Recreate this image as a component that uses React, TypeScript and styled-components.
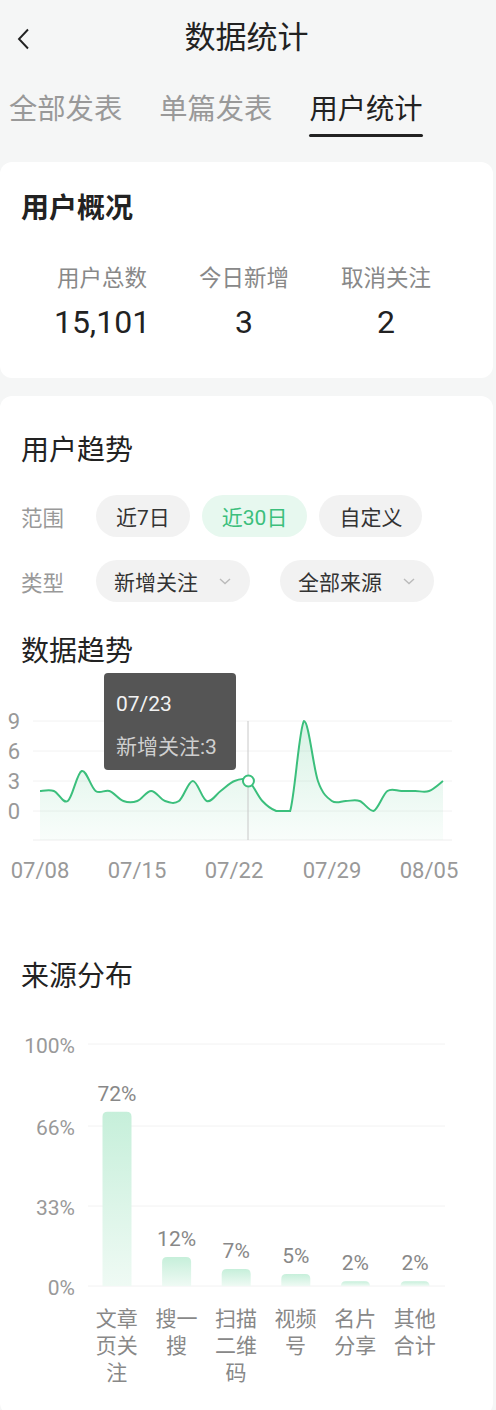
import React from "react";
import styled, { createGlobalStyle } from "styled-components";

const GlobalStyle = createGlobalStyle`
  html, body { margin: 0; padding: 0; background: #f5f6f6; }
  body { font-family: Roboto, "Noto Sans CJK SC", "Noto Sans", sans-serif; color: #222; }
  * { box-sizing: border-box; }
`;

const GREEN = "#3bbf7c";

const Page = styled.div`
  width: 496px;
  min-height: 1410px;
  padding-right: 3px;
  display: flex;
  flex-direction: column;
`;

const Header = styled.header`
  height: 76px;
  position: relative;
  display: flex;
  align-items: center;
  justify-content: center;
`;

const BackButton = styled.button`
  position: absolute;
  left: 12px;
  top: 25px;
  width: 22px;
  height: 28px;
  border: 0;
  background: none;
  padding: 0;
  display: flex;
  align-items: center;
  justify-content: center;
`;

const Title = styled.h1`
  margin: 0;
  font-size: 31px;
  font-weight: 400;
  color: #222;
  line-height: 38px;
`;

const Tabs = styled.nav`
  display: flex;
  gap: 37px;
  padding-left: 9px;
  height: 86px;
`;

const Tab = styled.div<{ $active?: boolean }>`
  position: relative;
  padding-top: 16px;
  font-size: 28.3px;
  line-height: 36px;
  height: 62px;
  color: ${(p) => (p.$active ? "#222" : "#999")};
  font-weight: 400;
  &::after {
    content: "";
    display: ${(p) => (p.$active ? "block" : "none")};
    position: absolute;
    left: 0;
    right: 0;
    top: 58px;
    height: 3px;
    border-radius: 2px;
    background: #222;
  }
`;

const Card = styled.section<{ $pad?: string }>`
  background: #fff;
  border-radius: 12px;
  padding: ${(p) => p.$pad || "29px 0 36px 21px"};
  margin-bottom: 18px;
`;

const CardTitle = styled.h2<{ $bold?: boolean; $top?: number }>`
  margin: ${(p) => p.$top ?? 0}px 0 0 0;
  font-size: 28px;
  line-height: 36px;
  font-weight: ${(p) => (p.$bold ? 700 : 400)};
  color: #222;
`;

const StatRow = styled.div`
  display: grid;
  grid-template-columns: repeat(3, 142px);
  margin-top: 36px;
  margin-left: 10px;
`;

const Stat = styled.div`
  display: flex;
  flex-direction: column;
  align-items: center;
`;

const StatLabel = styled.div`
  font-size: 22.5px;
  line-height: 30px;
  color: #888;
`;

const StatValue = styled.div`
  margin-top: 9px;
  font-size: 32px;
  line-height: 40px;
  color: #222;
`;

const FilterRow = styled.div<{ $top: number }>`
  display: flex;
  align-items: center;
  margin-top: ${(p) => p.$top}px;
  height: 42px;
`;

const FilterLabel = styled.span`
  font-size: 21.5px;
  color: #999;
  width: 75px;
`;

const Chip = styled.div<{ $active?: boolean; $gap?: number }>`
  height: 42px;
  padding: 0 20px;
  border-radius: 21px;
  display: flex;
  align-items: center;
  font-size: 21px;
  margin-right: ${(p) => p.$gap ?? 12}px;
  background: ${(p) => (p.$active ? "#e7f8ef" : "#f2f2f2")};
  color: ${(p) => (p.$active ? GREEN : "#333")};
`;

const DropChip = styled(Chip)`
  padding: 0 18px;
  gap: 20px;
`;

const ChartWrap = styled.div<{ $top?: number }>`
  position: relative;
  margin-left: -21px;
  margin-top: ${(p) => p.$top ?? 0}px;
  width: 493px;
`;

const Tooltip = styled.div`
  position: absolute;
  left: 104px;
  top: 3px;
  width: 132px;
  height: 97px;
  background: rgba(70, 70, 70, 0.92);
  border-radius: 4px;
  padding: 17px 0 0 12px;
  display: flex;
  flex-direction: column;
  gap: 15px;
`;

const TipDate = styled.div`
  font-size: 21px;
  line-height: 28px;
  color: #f2f2f2;
`;

const TipValue = styled.div`
  font-size: 21px;
  line-height: 28px;
  color: #cfcfcf;
`;

const BarLabels = styled.div`
  display: grid;
  grid-template-columns: repeat(6, 59.6px);
  padding-left: 87px;
  justify-items: center;
`;

const BarLabel = styled.div`
  width: 44px;
  font-size: 21px;
  line-height: 27px;
  color: #888;
  text-align: center;
  font-family: "Noto Sans CJK SC", sans-serif;
`;

const ChevronDown = () => (
  <svg width="14" height="10" viewBox="0 0 14 10">
    <polyline points="2,3 7,7.5 12,3" fill="none" stroke="#bbb" strokeWidth="1.4" />
  </svg>
);

const values = [2, 2, 1, 4, 2, 2, 1, 1, 2, 1, 1, 3, 1, 2, 3, 3, 1, 0, 0, 9, 3, 1, 1, 1, 0, 2, 2, 2, 2, 3];

// Catmull-Rom smoothing with control points clamped to the data range
function buildPath() {
  const pts = values.map((v, i) => [40 + (i * 403) / 29, 141 - v * 10]);
  const n = pts.length;
  const minY = 51;
  const maxY = 141;
  const clampY = (y: number) => Math.max(minY, Math.min(maxY, y));
  let d = `M${pts[0][0]},${pts[0][1]}`;
  for (let i = 0; i < n - 1; i++) {
    const p0 = pts[Math.max(0, i - 1)];
    const p1 = pts[i];
    const p2 = pts[i + 1];
    const p3 = pts[Math.min(n - 1, i + 2)];
    const t = 6;
    const c1x = p1[0] + (p2[0] - p0[0]) / t;
    const c1y = clampY(p1[1] + (p2[1] - p0[1]) / t);
    const c2x = p2[0] - (p3[0] - p1[0]) / t;
    const c2y = clampY(p2[1] - (p3[1] - p1[1]) / t);
    d += ` C${c1x.toFixed(2)},${c1y.toFixed(2)} ${c2x.toFixed(2)},${c2y.toFixed(2)} ${p2[0].toFixed(2)},${p2[1].toFixed(2)}`;
  }
  return { d, pts };
}

const LineChart = () => {
  const { d, pts } = buildPath();
  const area = `${d} L${pts[pts.length - 1][0]},170 L${pts[0][0]},170 Z`;
  const yLabels = [
    { t: "9", y: 51 },
    { t: "6", y: 81 },
    { t: "3", y: 111 },
    { t: "0", y: 141 },
  ];
  const xLabels = [
    { t: "07/08", x: 40 },
    { t: "07/15", x: 137 },
    { t: "07/22", x: 234 },
    { t: "07/29", x: 332 },
    { t: "08/05", x: 429 },
  ];
  return (
    <svg width="493" height="220" viewBox="0 0 493 220">
      <defs>
        <linearGradient id="areaGrad" x1="0" y1="0" x2="0" y2="1">
          <stop offset="0" stopColor={GREEN} stopOpacity="0.2" />
          <stop offset="1" stopColor={GREEN} stopOpacity="0.03" />
        </linearGradient>
      </defs>
      {yLabels.map((l) => (
        <g key={l.t}>
          <line x1="33" x2="452" y1={l.y} y2={l.y} stroke="#f2f2f2" strokeWidth="1" />
          <text x="14" y={l.y + 8} textAnchor="middle" fontSize="22" fill="#999" fontFamily="Roboto, sans-serif">
            {l.t}
          </text>
        </g>
      ))}
      <line x1="33" x2="452" y1="170" y2="170" stroke="#eee" strokeWidth="1" />
      <path d={area} fill="url(#areaGrad)" />
      <line x1="248" x2="248" y1="51" y2="170" stroke="#c8c8c8" strokeWidth="1" />
      <path d={d} fill="none" stroke={GREEN} strokeWidth="2" />
      <circle cx={pts[15][0]} cy={pts[15][1]} r="5.5" fill="#fff" stroke={GREEN} strokeWidth="2" />
      {xLabels.map((l) => (
        <text key={l.t} x={l.x} y="208" textAnchor="middle" fontSize="22" fill="#999" fontFamily="Roboto, sans-serif">
          {l.t}
        </text>
      ))}
    </svg>
  );
};

const bars = [
  { v: 72, label: "文章页关注" },
  { v: 12, label: "搜一搜" },
  { v: 7, label: "扫描二维码" },
  { v: 5, label: "视频号" },
  { v: 2, label: "名片分享" },
  { v: 2, label: "其他合计" },
];

const BarChart = () => {
  const base = 275;
  const full = 242;
  const grid = [
    { t: "100%", y: 33 },
    { t: "66%", y: 115 },
    { t: "33%", y: 195 },
    { t: "0%", y: 275 },
  ];
  return (
    <svg width="493" height="289" viewBox="0 0 493 289">
      <defs>
        <linearGradient id="barGrad" x1="0" y1="0" x2="0" y2="1">
          <stop offset="0" stopColor="#c6efda" />
          <stop offset="1" stopColor="#effaf4" />
        </linearGradient>
      </defs>
      {grid.map((g) => (
        <g key={g.t}>
          <line x1="88" x2="445" y1={g.y} y2={g.y} stroke="#f2f2f2" strokeWidth="1" />
          <text x="75" y={g.y + 9} textAnchor="end" fontSize="21" fill="#999" fontFamily="Roboto, sans-serif">
            {g.t}
          </text>
        </g>
      ))}
      {bars.map((b, i) => {
        const cx = 117 + i * 59.6;
        const h = Math.max(3, (b.v / 100) * full);
        const top = base - h;
        const r = Math.min(5, h);
        const x0 = cx - 14.5;
        const x1 = cx + 14.5;
        const p = `M${x0},${base} L${x0},${top + r} Q${x0},${top} ${x0 + r},${top} L${x1 - r},${top} Q${x1},${top} ${x1},${top + r} L${x1},${base} Z`;
        return (
          <g key={i}>
            <path d={p} fill="url(#barGrad)" />
            <text x={cx} y={top - 11} textAnchor="middle" fontSize="21" fill="#888" fontFamily="Roboto, sans-serif">
              {b.v}%
            </text>
          </g>
        );
      })}
    </svg>
  );
};

export default function App() {
  return (
    <>
      <GlobalStyle />
      <Page>
        <Header>
          <BackButton aria-label="back">
            <svg width="16" height="24" viewBox="0 0 16 24">
              <polyline points="13,2.5 4,12 13,21.5" fill="none" stroke="#222" strokeWidth="1.9" />
            </svg>
          </BackButton>
          <Title>数据统计</Title>
        </Header>
        <Tabs>
          <Tab>全部发表</Tab>
          <Tab>单篇发表</Tab>
          <Tab $active>用户统计</Tab>
        </Tabs>
        <Card>
          <CardTitle $bold>用户概况</CardTitle>
          <StatRow>
            <Stat>
              <StatLabel>用户总数</StatLabel>
              <StatValue>15,101</StatValue>
            </Stat>
            <Stat>
              <StatLabel>今日新增</StatLabel>
              <StatValue>3</StatValue>
            </Stat>
            <Stat>
              <StatLabel>取消关注</StatLabel>
              <StatValue>2</StatValue>
            </Stat>
          </StatRow>
        </Card>
        <Card $pad="37px 0 30px 21px">
          <CardTitle>用户趋势</CardTitle>
          <FilterRow $top={26}>
            <FilterLabel>范围</FilterLabel>
            <Chip>近7日</Chip>
            <Chip $active>近30日</Chip>
            <Chip>自定义</Chip>
          </FilterRow>
          <FilterRow $top={23}>
            <FilterLabel>类型</FilterLabel>
            <DropChip $gap={30}>
              新增关注
              <ChevronDown />
            </DropChip>
            <DropChip>
              全部来源
              <ChevronDown />
            </DropChip>
          </FilterRow>
          <CardTitle $top={32}>数据趋势</CardTitle>
          <ChartWrap>
            <LineChart />
            <Tooltip>
              <TipDate>07/23</TipDate>
              <TipValue>新增关注:3</TipValue>
            </Tooltip>
          </ChartWrap>
          <CardTitle $top={65}>来源分布</CardTitle>
          <ChartWrap $top={16}>
            <BarChart />
            <BarLabels>
              {bars.map((b) => (
                <BarLabel key={b.label}>{b.label}</BarLabel>
              ))}
            </BarLabels>
          </ChartWrap>
        </Card>
      </Page>
    </>
  );
}
